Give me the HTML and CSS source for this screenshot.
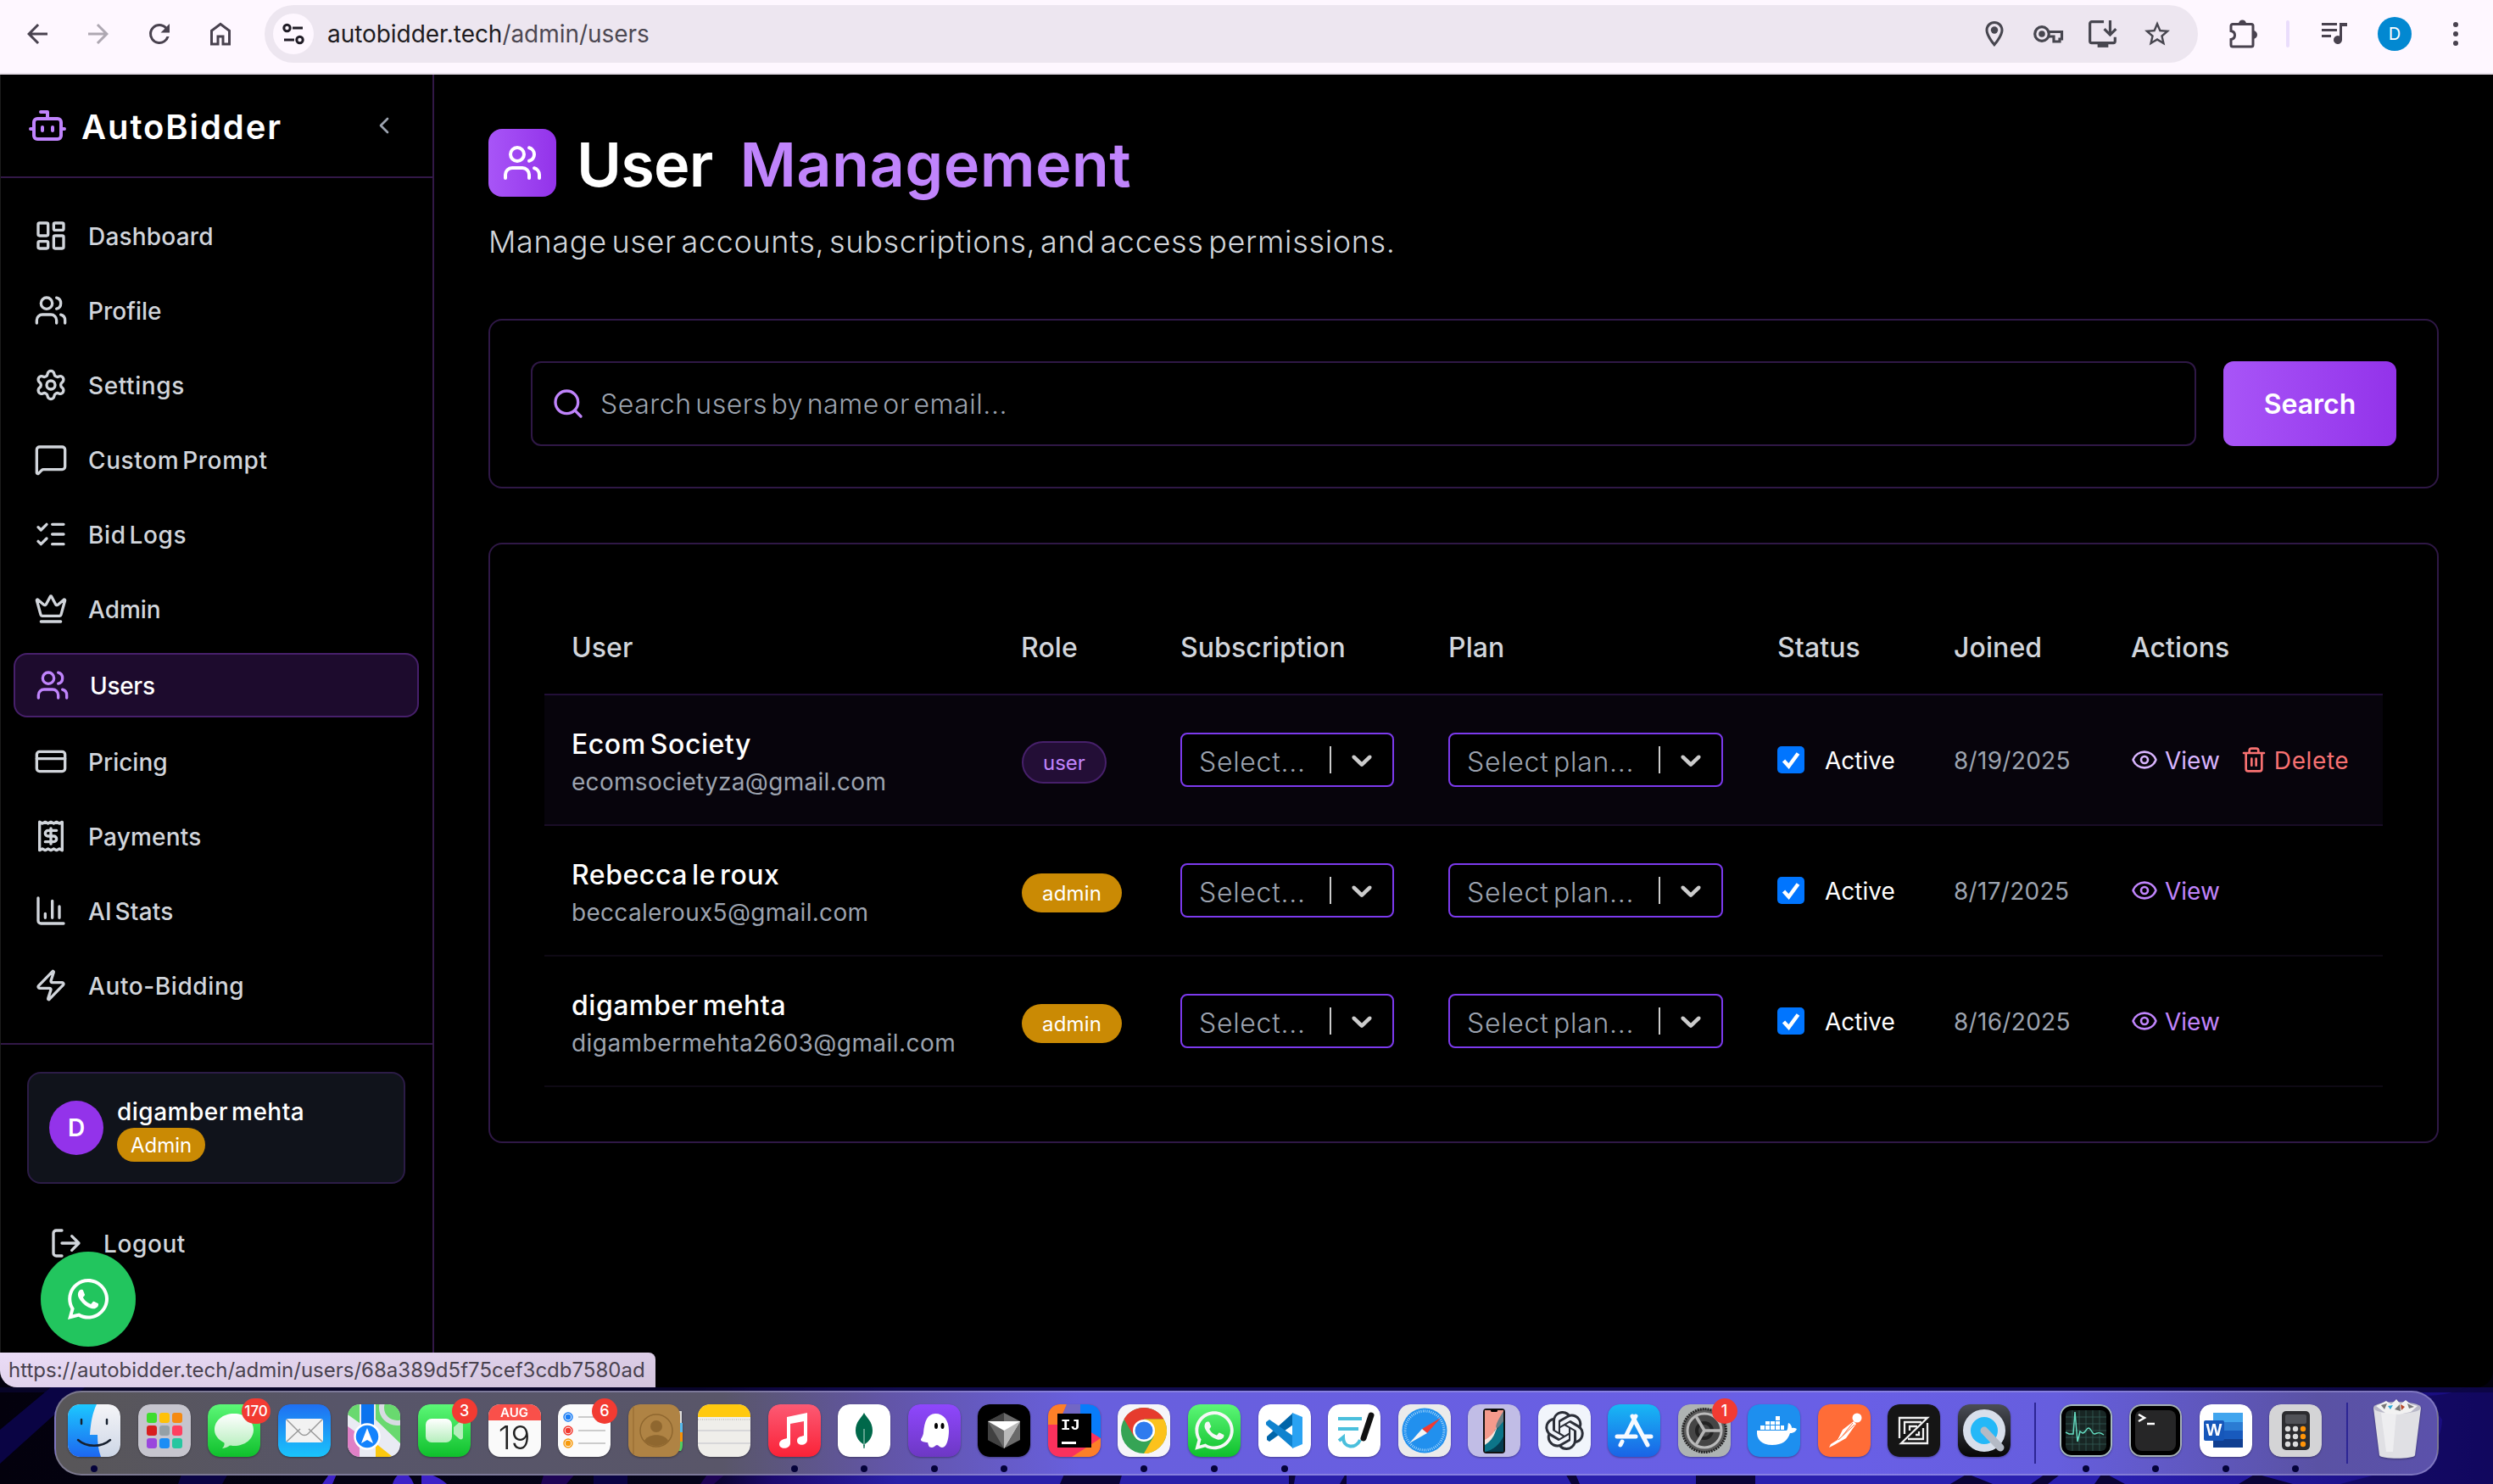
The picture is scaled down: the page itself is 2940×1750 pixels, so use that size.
FILE: index.html
```html
<!DOCTYPE html>
<html lang="en">
<head>
<meta charset="utf-8">
<title>AutoBidder - User Management</title>
<link rel="stylesheet" href="styles.css">
</head>
<body>
<svg class="sprite" aria-hidden="true">
  <symbol id="users" viewBox="0 0 24 24"><path d="M16 21v-2a4 4 0 0 0-4-4H6a4 4 0 0 0-4 4v2"/><circle cx="9" cy="7" r="4"/><path d="M22 21v-2a4 4 0 0 0-3-3.87M16 3.13a4 4 0 0 1 0 7.75"/></symbol>
  <symbol id="eye" viewBox="0 0 24 24"><path d="M2.06 12.35a1 1 0 0 1 0-.7 10.75 10.75 0 0 1 19.88 0 1 1 0 0 1 0 .7 10.75 10.75 0 0 1-19.88 0"/><circle cx="12" cy="12" r="3"/></symbol>
  <symbol id="caret" viewBox="0 0 20 20"><path d="M4.516 7.548c0.436-0.446 1.043-0.481 1.576 0l3.908 3.747 3.908-3.747c0.533-0.481 1.141-0.446 1.574 0 0.436 0.445 0.408 1.197 0 1.615-0.406 0.418-4.695 4.502-4.695 4.502-0.217 0.223-0.502 0.335-0.787 0.335s-0.57-0.112-0.789-0.335c0 0-4.287-4.084-4.695-4.502s-0.436-1.17 0-1.615z"/></symbol>
  <symbol id="whatsapp" viewBox="0 0 448 512"><path d="M380.9 97.1C339 55.1 283.2 32 223.9 32c-122.4 0-222 99.6-222 222 0 39.1 10.2 77.3 29.6 111L0 480l117.7-30.9c32.4 17.7 68.9 27 106.1 27h.1c122.3 0 224.1-99.6 224.1-222 0-59.3-25.2-115-67.1-157zm-157 341.6c-33.2 0-65.7-8.9-94-25.7l-6.7-4-69.8 18.3L72 359.2l-4.4-7c-18.5-29.4-28.2-63.3-28.2-98.2 0-101.7 82.8-184.5 184.6-184.5 49.3 0 95.6 19.2 130.4 54.1 34.8 34.9 56.2 81.2 56.1 130.5 0 101.8-84.9 184.6-186.6 184.6zm101.2-138.2c-5.5-2.8-32.8-16.2-37.9-18-5.1-1.9-8.8-2.8-12.5 2.8-3.7 5.6-14.3 18-17.6 21.8-3.2 3.7-6.5 4.2-12 1.4-32.6-16.3-54-29.1-75.5-66-5.7-9.8 5.7-9.1 16.3-30.3 1.8-3.7.9-6.9-.5-9.7-1.4-2.8-12.5-30.1-17.1-41.2-4.5-10.8-9.1-9.3-12.5-9.5-3.2-.2-6.9-.2-10.6-.2-3.7 0-9.7 1.4-14.8 6.9-5.1 5.6-19.4 19-19.4 46.3 0 27.3 19.9 53.7 22.6 57.4 2.8 3.7 39.1 59.7 94.8 83.8 35.2 15.2 49 16.5 66.6 13.9 10.7-1.6 32.8-13.4 37.4-26.4 4.6-13 4.6-24.1 3.2-26.4-1.3-2.5-5-3.9-10.5-6.6z"/></symbol>
</svg>

<div class="desktop">
<div class="browser">

  <header class="toolbar">
    <div class="tool-nav">
      <svg class="tool" viewBox="0 0 24 24"><path d="M20 11H7.83l5.59-5.59L12 4l-8 8 8 8 1.41-1.41L7.83 13H20v-2z"/></svg>
      <svg class="tool tool-off" viewBox="0 0 24 24"><path d="M12 4l-1.41 1.41L16.17 11H4v2h12.17l-5.58 5.59L12 20l8-8z"/></svg>
      <svg class="tool" viewBox="0 0 24 24"><path d="M17.65 6.35A7.96 7.96 0 0 0 12 4a8 8 0 1 0 7.73 10h-2.08A6 6 0 1 1 12 6c1.66 0 3.14.69 4.22 1.78L13 11h7V4z"/></svg>
      <svg class="tool" viewBox="0 0 24 24"><path d="M6 19h3v-6h6v6h3v-9l-6-4.500L6 10v9zm-2 2V9l8-6 8 6v12h-7v-6h-2v6z"/></svg>
    </div>
    <div class="omnibox">
      <span class="site-info"><svg viewBox="0 0 28 28"><g fill="none" stroke="#201c26" stroke-width="3"><circle cx="6.500" cy="7" r="3.700"/><path d="M13 7h12M3 21h12"/><circle cx="21.500" cy="21" r="3.700"/></g></svg></span>
      <span class="url">autobidder.tech<span class="url-path">/admin/users</span></span>
      <div class="omni-actions">
        <svg viewBox="0 0 24 24"><path d="M12 2C8.100 2 5 5.100 5 9c0 5.300 7 13 7 13s7-7.700 7-13c0-3.900-3.100-7-7-7zM7 9a5 5 0 0 1 10 0c0 2.900-2.900 7.200-5 9.900C9.900 16.200 7 11.900 7 9z"/><circle cx="12" cy="9" r="2.800"/></svg>
        <svg viewBox="0 0 36 30"><g fill="none" stroke="#47464f" stroke-width="3.200"><path d="M17.500 12.500H33.500V21h-2.500v3h-7v-6h-6.500"/><circle cx="10" cy="15" r="8.300"/></g><circle cx="10" cy="15" r="3.800"/></svg>
        <svg viewBox="0 0 34 34"><path fill="none" stroke="#47464f" stroke-width="3" d="M18 3.500H4.500a2 2 0 0 0-2 2V25a2 2 0 0 0 2 2h24a2 2 0 0 0 2-2v-4.500M25 2v15M18.500 11.500L25 18l6.500-6.500"/><path d="M11 27h12v5H11z"/></svg>
        <svg viewBox="0 0 24 24"><path d="M22 9.240l-7.190-.620L12 2 9.190 8.630 2 9.240l5.460 4.730L5.820 21 12 17.270 18.180 21l-1.630-7.030L22 9.240zM12 15.400l-3.760 2.270 1-4.280-3.320-2.880 4.380-.380L12 6.100l1.710 4.040 4.380.380-3.320 2.880 1 4.280L12 15.400z"/></svg>
      </div>
    </div>
    <div class="tool-right">
      <svg class="puzzle" viewBox="0 0 36 36"><path fill="none" stroke="#49424f" stroke-width="3" d="M4 8.500a2 2 0 0 1 2-2h22a2 2 0 0 1 2 2V31a2 2 0 0 1-2 2H6a2 2 0 0 1-2-2v-6.500c6-1 6-9 0-10z"/><path d="M13 6a4.500 4.500 0 0 1 9 0zM30 14a5 5 0 0 1 0 10z"/></svg>
      <i class="tool-rule"></i>
      <svg class="queue" viewBox="0 0 32 32"><path d="M1 3h18v3H1zM1 10h18v3H1zM1 17h11v3H1zM22 3h9v4h-6v16a5 5 0 1 1-3-4.600z"/></svg>
      <span class="profile">D</span>
      <svg class="dots" viewBox="0 0 8 32"><circle cx="4" cy="5" r="3"/><circle cx="4" cy="16" r="3"/><circle cx="4" cy="27" r="3"/></svg>
    </div>
  </header>

  <div class="page">
    <aside class="sidebar">
      <div class="brand">
        <svg class="line brand-icon" viewBox="0 0 24 24"><path d="M12 8V4H8"/><rect width="16" height="12" x="4" y="8" rx="2"/><path d="M2 14h2M20 14h2M15 13v2M9 13v2"/></svg>
        <span class="brand-name">AutoBidder</span>
        <svg class="line collapse" viewBox="0 0 24 24"><path d="m15 18-6-6 6-6"/></svg>
      </div>
      <nav class="menu">
        <a class="item"><svg class="line" viewBox="0 0 24 24"><rect width="7" height="9" x="3" y="3" rx="1"/><rect width="7" height="5" x="14" y="3" rx="1"/><rect width="7" height="9" x="14" y="12" rx="1"/><rect width="7" height="5" x="3" y="16" rx="1"/></svg><span>Dashboard</span></a>
        <a class="item snug"><svg class="line"><use href="#users"/></svg><span>Profile</span></a>
        <a class="item airy"><svg class="line" viewBox="0 0 24 24"><path d="M9.671 4.136a2.340 2.340 0 0 1 4.659 0 2.340 2.340 0 0 0 3.319 1.915 2.340 2.340 0 0 1 2.330 4.033 2.340 2.340 0 0 0 0 3.831 2.340 2.340 0 0 1-2.330 4.033 2.340 2.340 0 0 0-3.319 1.915 2.340 2.340 0 0 1-4.659 0 2.340 2.340 0 0 0-3.320-1.915 2.340 2.340 0 0 1-2.330-4.033 2.340 2.340 0 0 0 0-3.831A2.340 2.340 0 0 1 6.350 6.051a2.340 2.340 0 0 0 3.319-1.915"/><circle cx="12" cy="12" r="3"/></svg><span>Settings</span></a>
        <a class="item airy"><svg class="line" viewBox="0 0 24 24"><path d="M22 17a2 2 0 0 1-2 2H6.828a2 2 0 0 0-1.414.586l-2.202 2.202A.710.710 0 0 1 2 21.286V5a2 2 0 0 1 2-2h16a2 2 0 0 1 2 2z"/></svg><span>Custom Prompt</span></a>
        <a class="item airy"><svg class="line" viewBox="0 0 24 24"><path d="M13 5h8M13 12h8M13 19h8M3 17l2 2 4-4M3 7l2 2 4-4"/></svg><span>Bid Logs</span></a>
        <a class="item snug"><svg class="line" viewBox="0 0 24 24"><path d="M11.562 3.266a.5.5 0 0 1 .876 0L15.390 8.870a1 1 0 0 0 1.516.294L21.183 5.500a.5.5 0 0 1 .798.519l-2.834 10.246a1 1 0 0 1-.956.734H5.810a1 1 0 0 1-.957-.734L2.020 6.020a.5.5 0 0 1 .798-.519l4.276 3.664a1 1 0 0 0 1.516-.294zM5 21h14"/></svg><span>Admin</span></a>
        <a class="item item-active tight"><svg class="line"><use href="#users"/></svg><span>Users</span></a>
        <a class="item snug"><svg class="line" viewBox="0 0 24 24"><rect width="20" height="14" x="2" y="5" rx="2"/><path d="M2 10h20"/></svg><span>Pricing</span></a>
        <a class="item"><svg class="line" viewBox="0 0 24 24"><path d="M4 2v20l2-1 2 1 2-1 2 1 2-1 2 1 2-1 2 1V2l-2 1-2-1-2 1-2-1-2 1-2-1-2 1Z"/><path d="M16 8h-6a2 2 0 1 0 0 4h4a2 2 0 1 1 0 4H8M12 17.500v-11"/></svg><span>Payments</span></a>
        <a class="item"><svg class="line" viewBox="0 0 24 24"><path d="M3 3v16a2 2 0 0 0 2 2h16M18 17V9M13 17V5M8 17v-3"/></svg><span>AI Stats</span></a>
        <a class="item airy"><svg class="line" viewBox="0 0 24 24"><path d="M4 14a1 1 0 0 1-.780-1.630l9.900-10.200a.5.5 0 0 1 .860.460l-1.920 6.020A1 1 0 0 0 13 10h7a1 1 0 0 1 .780 1.630l-9.900 10.200a.5.5 0 0 1-.860-.460l1.920-6.020A1 1 0 0 0 11 14z"/></svg><span>Auto-Bidding</span></a>
      </nav>
      <div class="account">
        <div class="account-card">
          <span class="avatar">D</span>
          <div class="account-text"><span class="account-name">digamber mehta</span><span class="account-role">Admin</span></div>
        </div>
        <a class="logout"><svg class="line" viewBox="0 0 24 24"><path d="M9 21H5a2 2 0 0 1-2-2V5a2 2 0 0 1 2-2h4M16 17l5-5-5-5M21 12H9"/></svg><span>Logout</span></a>
      </div>
      <a class="chat"><svg><use href="#whatsapp"/></svg></a>
    </aside>

    <main class="content">
      <div class="heading">
        <span class="heading-icon"><svg class="line"><use href="#users"/></svg></span>
        <h1><span class="h-user">User</span><span class="accent">Management</span></h1>
      </div>
      <p class="lead">Manage user accounts, subscriptions, and access permissions.</p>

      <section class="card search-card">
        <div class="search-box">
          <svg class="line" viewBox="0 0 24 24"><circle cx="11" cy="11" r="8"/><path d="m21 21-4.300-4.300"/></svg>
          <span>Search users by name or email...</span>
        </div>
        <button class="search-button">Search</button>
      </section>

      <section class="card table-card">
        <div class="row head">
          <span>User</span><span>Role</span><span>Subscription</span><span>Plan</span><span>Status</span><span>Joined</span><span>Actions</span>
        </div>
        <div class="row row-hover">
          <div class="person"><span class="name">Ecom Society</span><span class="mail">ecomsocietyza@gmail.com</span></div>
          <div><span class="badge badge-user">user</span></div>
          <div><div class="select"><span>Select...</span><i></i><svg><use href="#caret"/></svg></div></div>
          <div><div class="select"><span>Select plan...</span><i></i><svg><use href="#caret"/></svg></div></div>
          <div class="status"><span class="check"><svg viewBox="0 0 32 32"><path d="M7.500 17l6 6.500L24.500 8.500"/></svg></span><span>Active</span></div>
          <div class="date">8/19/2025</div>
          <div class="actions"><a class="view view-hover"><svg class="line"><use href="#eye"/></svg><span>View</span></a><a class="delete"><svg class="line" viewBox="0 0 24 24"><path d="M10 11v6M14 11v6M19 6v14a2 2 0 0 1-2 2H7a2 2 0 0 1-2-2V6M3 6h18M8 6V4a2 2 0 0 1 2-2h4a2 2 0 0 1 2 2v2"/></svg><span>Delete</span></a></div>
        </div>
        <div class="row">
          <div class="person"><span class="name">Rebecca le roux</span><span class="mail">beccaleroux5@gmail.com</span></div>
          <div><span class="badge">admin</span></div>
          <div><div class="select"><span>Select...</span><i></i><svg><use href="#caret"/></svg></div></div>
          <div><div class="select"><span>Select plan...</span><i></i><svg><use href="#caret"/></svg></div></div>
          <div class="status"><span class="check"><svg viewBox="0 0 32 32"><path d="M7.500 17l6 6.500L24.500 8.500"/></svg></span><span>Active</span></div>
          <div class="date">8/17/2025</div>
          <div class="actions"><a class="view"><svg class="line"><use href="#eye"/></svg><span>View</span></a></div>
        </div>
        <div class="row">
          <div class="person"><span class="name">digamber mehta</span><span class="mail mail-wide">digambermehta2603@gmail.com</span></div>
          <div><span class="badge">admin</span></div>
          <div><div class="select"><span>Select...</span><i></i><svg><use href="#caret"/></svg></div></div>
          <div><div class="select"><span>Select plan...</span><i></i><svg><use href="#caret"/></svg></div></div>
          <div class="status"><span class="check"><svg viewBox="0 0 32 32"><path d="M7.500 17l6 6.500L24.500 8.500"/></svg></span><span>Active</span></div>
          <div class="date">8/16/2025</div>
          <div class="actions"><a class="view"><svg class="line"><use href="#eye"/></svg><span>View</span></a></div>
        </div>
      </section>
    </main>
  </div>
  <div class="link-status"><span>https://autobidder.tech/admin/users/68a389d5f75cef3cdb7580ad</span></div>
</div>

<footer class="dock-area">
  <svg class="wallpaper" viewBox="0 0 2940 114" preserveAspectRatio="none">
    <defs><linearGradient id="wp"><stop offset="0" stop-color="#03010d"/><stop offset=".28" stop-color="#05031a"/><stop offset=".31" stop-color="#1c0a6e"/><stop offset=".36" stop-color="#2a20a8"/><stop offset=".85" stop-color="#2a20b0"/><stop offset="1" stop-color="#170a78"/></linearGradient></defs>
    <rect width="2940" height="114" fill="url(#wp)"/>
    <rect width="2940" height="6" fill="#0a0630" opacity=".75"/>
    <path fill="#0a0444" d="M0 50L60 0h40L0 90zM210 114l5-14h55l-8 14zM700 114V98h40v16z"/>
    <path fill="#3d22c8" d="M380 114l10-14h8l-6 14zM463 114c5-16 18-18 25 0zM497 114V100c10 2 22 6 30 14z"/>
    <path fill="#1e0455" d="M638 114l4-14h38l-12 14zM826 114l10-14h22l-16 14z"/>
    <path fill="#0b0438" d="M1250 114l6-14h68l-4 14zM1520 102h8l-2 12h-6zM1580 114l8-14v14zM1845 100h12l6 14h-10zM2000 100h70v14h-70zM2395 114l20-14h18l-18 14zM2300 114l20-12 30 12zM2470 114l10-14 26 14zM2640 114l20-12 44 12z"/>
    <path fill="#0c0548" d="M2860 10c30 0 60-10 80-30v134h-180l60-16c30 0 60-30 60-60z" opacity=".55"/>
  </svg>
  <div class="dock">
    <div class="app on"><svg viewBox="0 0 62 62"><defs><linearGradient id="fa" x2="0" y2="1"><stop stop-color="#1cc8ff"/><stop offset="1" stop-color="#1d67f0"/></linearGradient><linearGradient id="fb" x2="0" y2="1"><stop stop-color="#f5f5f8"/><stop offset="1" stop-color="#cdd6e6"/></linearGradient></defs><rect width="62" height="62" rx="14" fill="url(#fb)"/><path fill="url(#fa)" d="M14 0h20c-5 10-7 22-8 36h9c0 10 1 18 4 26H14A14 14 0 0 1 0 48V14A14 14 0 0 1 14 0z"/><path d="M16 18v5M46 18v5M12 42c10 9 28 9 38 0" fill="none" stroke="#16202e" stroke-width="2.500" stroke-linecap="round"/></svg></div>
    <div class="app"><svg viewBox="0 0 62 62"><rect width="62" height="62" rx="14" fill="#c6c5ce"/><g><rect x="10" y="10" width="12" height="12" rx="3" fill="#3fdc2f"/><rect x="25" y="10" width="12" height="12" rx="3" fill="#ffc107"/><rect x="40" y="10" width="12" height="12" rx="3" fill="#f58a12"/><rect x="10" y="25" width="12" height="12" rx="3" fill="#d81e1e"/><rect x="25" y="25" width="12" height="12" rx="3" fill="#95a0a6"/><rect x="40" y="25" width="12" height="12" rx="3" fill="#ff3f60"/><rect x="10" y="40" width="12" height="12" rx="3" fill="#9a46dd"/><rect x="25" y="40" width="12" height="12" rx="3" fill="#1b8df5"/><rect x="40" y="40" width="12" height="12" rx="3" fill="#26c6a0"/></g></svg></div>
    <div class="app"><svg viewBox="0 0 62 62"><defs><linearGradient id="gr" x2="0" y2="1"><stop stop-color="#5cf777"/><stop offset="1" stop-color="#0fc02c"/></linearGradient><linearGradient id="wh" x2="0" y2="1"><stop stop-color="#fff"/><stop offset="1" stop-color="#b5eebc"/></linearGradient></defs><rect width="62" height="62" rx="14" fill="url(#gr)"/><path fill="url(#wh)" d="M31 11c13 0 23 8 23 19S44 49 31 49c-2 0-4 0-5-.4-2 2-5 3-9 3.400 2-2 3-4 2.500-6.500C13 42 8 37 8 30c0-11 10-19 23-19z"/></svg><b class="count wide">170</b></div>
    <div class="app"><svg viewBox="0 0 62 62"><defs><linearGradient id="ml" x2="0" y2="1"><stop stop-color="#1f6ff2"/><stop offset="1" stop-color="#1ac4fb"/></linearGradient></defs><rect width="62" height="62" rx="14" fill="url(#ml)"/><rect x="9" y="17" width="44" height="28" rx="3" fill="#f2f2f2"/><path d="M10 44l16-15M52 44L36 29M10 18l17 17c2 2 6 2 8 0l17-17" fill="none" stroke="#9a9a9a" stroke-width="1.500"/></svg></div>
    <div class="app"><svg viewBox="0 0 62 62"><clipPath id="mc"><rect width="62" height="62" rx="14"/></clipPath><g clip-path="url(#mc)"><rect width="62" height="62" fill="#e9ebf3"/><path fill="#69d96f" d="M0 0h14v22L0 12zM33 0h29v46L33 18z"/><path fill="#df80c6" d="M0 26l14 10v26H0z"/><path fill="#fbc80f" d="M33 46l20 16H33z"/><path fill="#0c73ee" d="M16 0h15v34H16z"/><circle cx="58" cy="4" r="18" fill="none" stroke="#d8dbe2" stroke-width="6"/><circle cx="23" cy="38" r="14.500" fill="#1383fd" stroke="#fff" stroke-width="2.500"/><path fill="#fff" d="M23 28l7 18-7-4-7 4z"/></g></svg></div>
    <div class="app"><svg viewBox="0 0 62 62"><rect width="62" height="62" rx="14" fill="url(#gr)"/><rect x="9" y="17" width="31" height="28" rx="7" fill="url(#wh)"/><path d="M42 27l7-6c2-1 4 0 4 2v16c0 2-2 3-4 2l-7-6z" fill="#b5eebc"/></svg><b class="count">3</b></div>
    <div class="app"><div class="cal"><span>AUG</span><strong>19</strong></div></div>
    <div class="app"><svg viewBox="0 0 62 62"><rect width="62" height="62" rx="14" fill="#fbfbfb"/><path d="M24 15h32M24 31h32M24 46h32" stroke="#bdbdbd" stroke-width="1.500"/><g fill="none" stroke-width="1.500"><circle cx="12" cy="15" r="5" stroke="#1a7df5"/><circle cx="12" cy="31" r="5" stroke="#f2392f"/><circle cx="12" cy="46" r="5" stroke="#f79a0b"/></g><circle cx="12" cy="15" r="3.300" fill="#1a7df5"/><circle cx="12" cy="31" r="3.300" fill="#f2392f"/><circle cx="12" cy="46" r="3.300" fill="#f79a0b"/></svg><b class="count">6</b></div>
    <div class="app"><svg class="contacts" viewBox="0 0 64 62"><path fill="#dedede" d="M56 8h7v14h-7z"/><path fill="#55b9ee" d="M56 22h8v11h-8z"/><path fill="#f6920a" d="M56 33h8v11h-8z"/><path fill="#52cf60" d="M56 44h8v11h-8z"/><rect width="61" height="62" rx="13" fill="#af8344"/><path d="M6 3v56" stroke="#94692f"/><circle cx="33" cy="31" r="19" fill="none" stroke="#8f672f" stroke-width="1.500"/><circle cx="33" cy="26" r="7" fill="#8f672f"/><path fill="#8f672f" d="M19 43c4-9 24-9 28 0-7 8-21 8-28 0z"/></svg></div>
    <div class="app"><svg viewBox="0 0 62 62"><rect width="62" height="62" rx="14" fill="#efeeea"/><path fill="#ffc90f" d="M14 0h34a14 14 0 0 1 14 14v1H0v-1A14 14 0 0 1 14 0z"/><path stroke="#aaa" stroke-dasharray="1 1.500" d="M0 18h62"/><path stroke="#cfcfd4" stroke-width="1.500" d="M0 31h62M0 46h62"/></svg></div>
    <div class="app on"><svg viewBox="0 0 62 62"><defs><linearGradient id="mu" x2="0" y2="1"><stop stop-color="#fc5a74"/><stop offset="1" stop-color="#fa2237"/></linearGradient></defs><rect width="62" height="62" rx="14" fill="url(#mu)"/><path fill="#fff" d="M22 15l24-5v32c0 7-12 8-12 1 0-5 5-5 8-6V20l-16 3v23c0 7-13 8-13 1 0-5 6-6 9-7z"/></svg></div>
    <div class="app on"><svg viewBox="0 0 62 62"><rect width="62" height="62" rx="14" fill="#fff"/><path fill="#00684a" d="M31 10c3 6 10 10 10 21 0 9-6 14-9 16l-.5 5h-1l-.5-5c-3-2-9-7-9-16 0-11 7-15 10-21z"/><path stroke="#b7d9ce" d="M31 29v19"/></svg></div>
    <div class="app on"><svg viewBox="0 0 62 62"><defs><linearGradient id="gh" x2="0" y2="1"><stop stop-color="#8f47fd"/><stop offset="1" stop-color="#6d38c4"/></linearGradient></defs><rect width="62" height="62" rx="14" fill="url(#gh)"/><path fill="#fff" d="M32 11c10 0 16 8 16 20 0 8-2 20-8 20-3 0-4-3-6-3s-3 3-6 3c-4 0-4-3-5-6-3 0-8-1-8-3s2-3 3-8c1-14 5-23 14-23z"/><ellipse cx="33" cy="25.500" rx="2" ry="3.500"/><ellipse cx="40.500" cy="25.500" rx="2" ry="3.500"/></svg></div>
    <div class="app on"><svg viewBox="0 0 62 62"><rect width="62" height="62" rx="14"/><path fill="#6a6a6a" d="M31 10l19 10v22L31 52 12 42V20z"/><path fill="#303030" d="M31 10L12 20h19zM12 20l19 32-19-10z" opacity=".7"/><path fill="#fff" d="M12 20h38L31 52V31z"/><path fill="#b9b9b9" d="M50 20L31 52V31z"/></svg></div>
    <div class="app"><svg viewBox="0 0 62 62"><clipPath id="ij"><rect width="62" height="62" rx="14"/></clipPath><g clip-path="url(#ij)"><rect width="62" height="62" fill="#fa315d"/><path fill="#fd7f28" d="M0 0h22l-10 24H0zM28 62l34-22v22z"/><path fill="#087cfa" d="M30 0h32v40L30 20z"/><path fill="#7267c4" d="M22 0h16v14H16z"/></g><path d="M11 11h40v40H11z"/><path fill="#fff" d="M16 44h17v3H16z"/><text x="15" y="30" class="ij">IJ</text></svg></div>
    <div class="app on"><svg viewBox="0 0 62 62"><rect width="62" height="62" rx="14" fill="#f6f5f9"/><circle cx="31" cy="31" r="27" fill="#35a455"/><path fill="#e63b2e" d="M7.600 17.500L19.300 37.700 31 17.500H54.400A27 27 0 0 0 7.600 17.500z"/><path fill="#fcc21b" d="M31 17.500h23.400A27 27 0 0 1 31 58l11.700-20.300z"/><circle cx="31" cy="31" r="13" fill="#fff"/><circle cx="31" cy="31" r="10.500" fill="#2f7bee"/></svg></div>
    <div class="app on"><svg viewBox="0 0 62 62"><rect width="62" height="62" rx="14" fill="url(#gr)"/><svg class="wa" x="7" y="5" width="48" height="52"><use href="#whatsapp"/></svg></svg></div>
    <div class="app on"><svg viewBox="0 0 62 62"><rect width="62" height="62" rx="14" fill="#fff"/><path fill="#0065a9" d="M41 10L10 38v4l3 2 28-20z"/><path fill="#1083cf" d="M13 18l-4 3v3l32 28 1-14z"/><path fill="#2aa2f2" d="M40 10l12 5v32l-12 5z"/></svg></div>
    <div class="app"><svg viewBox="0 0 62 62"><rect width="62" height="62" rx="14" fill="#fff"/><path d="M12 17h28M12 29h24M13 43l5-4c0 13 15 14 20 3" fill="none" stroke="#4abfdc" stroke-width="4"/><path d="M51 13l-9 27" stroke="#111" stroke-width="7" stroke-linecap="round"/></svg></div>
    <div class="app"><svg viewBox="0 0 62 62"><rect width="62" height="62" rx="14" fill="#ebebeb"/><circle cx="31" cy="31" r="26.500" fill="#2190ee"/><circle cx="31" cy="31" r="23" fill="none" stroke="#bfe2fb" stroke-width="3" stroke-dasharray=".8 1.600"/><path fill="#f03b33" d="M50 16L34 34l-6-5z"/><path fill="#f4f4f4" d="M13 46l15-17 6 5z"/></svg></div>
    <div class="app"><svg viewBox="0 0 62 62"><rect width="62" height="62" rx="14" fill="#c1bde6"/><rect x="18" y="5" width="26" height="53" rx="4" fill="#111"/><path fill="#f49a8c" d="M20 7h22v14l-10 9c-3 10-8 12-12 14z"/><path fill="#6d7f86" d="M42 8v14l-8 7c-3-4 4-14 8-21z"/><path fill="#f6e7df" d="M34 27c-4 8-8 12-14 15v8c8-4 14-12 14-23z"/><path fill="#0c7488" d="M42 20v36H20V48c6-4 10-8 13-17z"/><path fill="#063c50" d="M42 38v18H20c10-2 17-8 22-18z"/><rect x="27" y="6" width="8" height="3" rx="1.500"/></svg></div>
    <div class="app"><svg viewBox="0 0 62 62"><rect width="62" height="62" rx="14" fill="#f1f5fb"/><svg x="8" y="8" width="46" height="46" viewBox="0 0 24 24"><path fill="#2b2f38" d="M22.2819 9.8211a5.9847 5.9847 0 0 0-.5157-4.9108 6.0462 6.0462 0 0 0-6.5098-2.9A6.0651 6.0651 0 0 0 4.9807 4.1818a5.9847 5.9847 0 0 0-3.9977 2.9 6.0462 6.0462 0 0 0 .7427 7.0966 5.98 5.98 0 0 0 .511 4.9107 6.051 6.051 0 0 0 6.5146 2.9001A5.9847 5.9847 0 0 0 13.2599 24a6.0557 6.0557 0 0 0 5.7718-4.2058 5.9894 5.9894 0 0 0 3.9977-2.9001 6.0557 6.0557 0 0 0-.7475-7.0729zm-9.022 12.6081a4.4755 4.4755 0 0 1-2.8764-1.0408l.1419-.0804 4.7783-2.7582a.7948.7948 0 0 0 .3927-.6813v-6.7369l2.02 1.1686a.071.071 0 0 1 .038.052v5.5826a4.504 4.504 0 0 1-4.4945 4.4944zm-9.6607-4.1254a4.4708 4.4708 0 0 1-.5346-3.0137l.142.0852 4.783 2.7582a.7712.7712 0 0 0 .7806 0l5.8428-3.3685v2.3324a.0804.0804 0 0 1-.0332.0615L9.74 19.9502a4.4992 4.4992 0 0 1-6.1408-1.6464zM2.3408 7.8956a4.485 4.485 0 0 1 2.3655-1.9728V11.6a.7664.7664 0 0 0 .3879.6765l5.8144 3.3543-2.0201 1.1685a.0757.0757 0 0 1-.071 0l-4.8303-2.7865A4.504 4.504 0 0 1 2.3408 7.872zm16.5963 3.8558L13.1038 8.364 15.1192 7.2a.0757.0757 0 0 1 .071 0l4.8303 2.7913a4.4944 4.4944 0 0 1-.6765 8.1042v-5.6772a.79.79 0 0 0-.407-.667zm2.0107-3.0231l-.142-.0852-4.7735-2.7818a.7759.7759 0 0 0-.7854 0L9.409 9.2297V6.8974a.0662.0662 0 0 1 .0284-.0615l4.8303-2.7866a4.4992 4.4992 0 0 1 6.6802 4.66zM8.3065 12.863l-2.02-1.1638a.0804.0804 0 0 1-.038-.0567V6.0742a4.4992 4.4992 0 0 1 7.3757-3.4537l-.142.0805L8.704 5.459a.7948.7948 0 0 0-.3927.6813zm1.0976-2.3654l2.602-1.4998 2.6069 1.4998v2.9994l-2.5974 1.4997-2.6067-1.4997Z"/></svg></svg></div>
    <div class="app"><svg viewBox="0 0 62 62"><defs><linearGradient id="as" x2="0" y2="1"><stop stop-color="#18b8f5"/><stop offset="1" stop-color="#1a63e6"/></linearGradient></defs><rect width="62" height="62" rx="14" fill="url(#as)"/><path d="M33 14L21 38M17 44l-2 4M29 14l18 34M11 38h22M43 38h8" stroke="#f7faff" stroke-width="5" stroke-linecap="round"/></svg></div>
    <div class="app"><svg viewBox="0 0 62 62"><rect width="62" height="62" rx="14" fill="#aeb3b3"/><circle cx="31" cy="31" r="25.500" fill="#5b5b5b" stroke="#252525" stroke-width="3" stroke-dasharray="2 1"/><circle cx="31" cy="31" r="20" fill="#454545" stroke="#bababa" stroke-width="3"/><circle cx="31" cy="31" r="9" fill="none" stroke="#222" stroke-width="4"/><path d="M31 31h20M31 31L21 14M31 31L21 48" stroke="#b5b5b5" stroke-width="3.500"/></svg><b class="count">1</b></div>
    <div class="app"><svg viewBox="0 0 62 62"><rect width="62" height="62" rx="14" fill="#1d8fef"/><g fill="#fff"><path d="M11 31h35c2-2 1-6 2-9 3 1 4 4 4 6 2-.5 4 0 6 1-1 3-4 5-8 5-3 9-9 14-21 14-13 0-19-7-18-17z"/><path d="M15 25h5v5h-5zM21 25h5v5h-5zM27 25h5v5h-5zM33 25h5v5h-5zM39 25h4v5h-4zM21 20h5v4h-5zM27 20h5v4h-5zM33 20h5v4h-5zM33 14h5v5h-5z"/></g></svg></div>
    <div class="app"><svg viewBox="0 0 62 62"><rect width="62" height="62" rx="14" fill="#ff6c37"/><g fill="#fff"><circle cx="46" cy="16" r="5.500"/><path d="M42 20l3 3-12 17-14 8-6 3 2-4 8-5 6-12z"/></g><path d="M41 22L29 37M43 24L24 42" stroke="#ff6c37"/></svg></div>
    <div class="app"><svg viewBox="0 0 62 62"><rect width="62" height="62" rx="14" fill="#151515"/><path fill="none" stroke="#f2f2f2" stroke-width="2.300" d="M14 40V16h33L16 46h31V22M20 35V21h20M24 41h18V28M26 31v-5h9M33 36h4v-4"/></svg></div>
    <div class="app"><svg viewBox="0 0 62 62"><defs><linearGradient id="qt" x2="0" y2="1"><stop stop-color="#4a4d56"/><stop offset="1" stop-color="#060606"/></linearGradient></defs><rect width="62" height="62" rx="14" fill="url(#qt)"/><circle cx="31" cy="31" r="20.500" fill="#24b8f8" stroke="#d8dfeb" stroke-width="9"/><path d="M31 31l19 20" stroke="#b4bac5" stroke-width="9" stroke-linecap="round"/></svg></div>
    <i class="dock-rule"></i>
    <div class="app on"><svg viewBox="0 0 62 62"><rect x="1" y="1" width="60" height="60" rx="13" stroke="#a5b9bd" stroke-width="2"/><rect x="7" y="7" width="48" height="48" rx="6" fill="#182624"/><path stroke="#335a55" stroke-width=".8" d="M15 7v48M23 7v48M31 7v48M39 7v48M47 7v48M7 15h48M7 23h48M7 31h48M7 39h48M7 47h48"/><path fill="none" stroke="#64dcc0" stroke-width="1.500" d="M7 33l4 2h5l2-26 3 35 3-12 3 2c4 0 4-6 7-6s4 7 7 7 4-4 11 1"/></svg></div>
    <div class="app on"><svg viewBox="0 0 62 62"><rect x="1" y="1" width="60" height="60" rx="13" stroke="#a5b0b4" stroke-width="2"/><rect x="7" y="7" width="48" height="48" rx="8" fill="#262627"/><path fill="none" stroke="#fff" stroke-width="2.500" d="M11 12l7 4-7 4M21 23h9"/></svg></div>
    <div class="app on"><svg viewBox="0 0 62 62"><rect width="62" height="62" rx="14" fill="#fff"/><path fill="#41a5ee" d="M16 10h35v11H16z"/><path fill="#2b7cd3" d="M16 21h35v10H16z"/><path fill="#185abd" d="M16 31h35v10H16z"/><path fill="#103f91" d="M16 41h35v10H16z"/><rect x="5" y="19" width="24" height="24" rx="2" fill="#1657ba"/><text x="17" y="37" text-anchor="middle" class="word">W</text></svg></div>
    <div class="app on"><svg viewBox="0 0 62 62"><rect width="62" height="62" rx="14" fill="#d4d4d6"/><rect x="15" y="8" width="33" height="46" rx="5" fill="#2c2c2f"/><rect x="19" y="12" width="25" height="11" rx="2" fill="#515257"/><g fill="#dcdcdc"><circle cx="22" cy="29" r="3.200"/><circle cx="31" cy="29" r="3.200"/><circle cx="22" cy="38" r="3.200"/><circle cx="31" cy="38" r="3.200"/><circle cx="22" cy="47" r="3.200"/><circle cx="31" cy="47" r="3.200"/></g><g fill="#ff9408"><circle cx="40" cy="29" r="3.200"/><circle cx="40" cy="38" r="3.200"/><circle cx="40" cy="47" r="3.200"/></g></svg></div>
    <i class="dock-rule"></i>
    <div class="app"><svg class="trash" viewBox="0 0 62 74"><path fill="#e0e0e4" d="M3 12h56l-7 56c-1 5-41 5-42 0z"/><path fill="#f3f3f5" d="M12 18h18l-4 46h-8z" opacity=".7"/><ellipse cx="31" cy="12" rx="28" ry="7" fill="#b9b8c8"/><path fill="#f2f2f2" d="M6 10l12-6 6 4 6-6 5 6 6-5 6 5 8 2-8 7-14 3-15-1z"/><path fill="#777" d="M12 9l7-2-3 7zM43 7l8 4-6 2zM28 14l6-6 1 8z"/><path fill="#2aa9d8" d="M20 10l6-1-3 5z"/><path fill="#b5472a" d="M35 8l5 3-4 4z"/></svg></div>
  </div>
</footer>
</div>
</body>
</html>
```
FILE: styles.css
```css
* { box-sizing: border-box; }
body { margin: 0; background: #03010d; font-family: "Inter", "Liberation Sans", sans-serif; color: #fff; }
svg { display: block; flex: none; }
.sprite { position: absolute; width: 0; height: 0; }
.line { fill: none; stroke: currentColor; stroke-width: 2; stroke-linecap: round; stroke-linejoin: round; }

.desktop { width: 2940px; height: 1750px; display: flex; flex-direction: column; overflow: hidden; }
.browser { position: relative; height: 1636px; display: flex; flex-direction: column; background: #000; border-radius: 0 0 20px 20px; overflow: hidden; flex: none; }

/* Browser toolbar */
.toolbar { height: 88px; flex: none; display: flex; padding: 6px 0 12px 26px; background: #fef7ff; border-bottom: 2px solid #e8e0ea; }
.tool-nav { display: flex; align-items: center; gap: 36px; width: 286px; }
.tool-nav .tool { width: 36px; height: 36px; fill: #49424f; }
.tool-nav .tool-off { fill: #aea8b2; }
.omnibox { width: 2280px; height: 68px; border-radius: 34px; background: #ede6f0; display: flex; align-items: center; padding: 0 30px 0 10px; }
.site-info { width: 48px; height: 48px; border-radius: 50%; background: #fef7ff; display: grid; place-items: center; }
.site-info svg { width: 28px; height: 28px; }
.url { margin-left: 16px; font-size: 28px; color: #1d1b20; letter-spacing: -.05px; }
.url-path { color: #4c4852; }
.omni-actions { margin-left: auto; display: flex; gap: 28px; align-items: center; }
.omni-actions svg { width: 36px; height: 36px; fill: #47464f; }
.tool-right { display: flex; align-items: center; padding-left: 35px; fill: #49424f; }
.puzzle { width: 36px; height: 36px; }
.tool-rule { width: 4px; height: 32px; border-radius: 2px; background: #eaddfc; margin: 0 37px 0 33px; }
.queue { width: 32px; height: 32px; }
.profile { width: 40px; height: 40px; border-radius: 50%; background: #0288d1; font-size: 20px; display: grid; place-items: center; margin-left: 35px; }
.dots { width: 8px; height: 32px; margin-left: 48px; }

.page { flex: 1; display: flex; border-left: 1px solid #1c1c1c; }

/* Sidebar */
.sidebar { width: 511px; border-right: 2px solid #321847; position: relative; color: #d1d5db; }
.brand { height: 122px; border-bottom: 2px solid #321847; display: flex; align-items: center; padding: 0 41px 0 31px; }
.brand-icon { width: 48px; height: 48px; color: #c084fc; }
.brand-name { margin-left: 16px; padding-top: 2px; font-size: 40px; font-weight: 600; letter-spacing: 1.900px; color: #fff; }
.collapse { width: 32px; height: 32px; color: #9ca3af; margin-left: auto; }
.menu { padding: 32px 16px 32px 15px; display: flex; flex-direction: column; gap: 16px; }
.item { height: 72px; padding: 0 24px; display: flex; align-items: center; gap: 24px; font-size: 28px; font-weight: 500; border-radius: 16px; letter-spacing: .2px; word-spacing: -4px; }
.item span, .logout span { padding-top: 2px; }
.airy { letter-spacing: .6px; }
.snug { letter-spacing: 0; }
.tight { letter-spacing: -.300px; }
.item svg, .logout svg { width: 40px; height: 40px; }
.item-active { height: 76px; border: 2px solid #47206b; background: #1d0b2d; color: #fff; }
.item-active svg { color: #c084fc; }
.account { border-top: 2px solid #321847; padding: 32px 32px 0 31px; }
.account-card { height: 132px; border: 2px solid #2c1c47; border-radius: 16px; background: #10131b; display: flex; align-items: center; gap: 16px; padding: 0 24px; }
.avatar { width: 64px; height: 64px; border-radius: 50%; background: #9333ea; color: #fff; display: grid; place-items: center; font-size: 28px; font-weight: 600; }
.account-text { display: flex; flex-direction: column; align-items: flex-start; }
.account-name { height: 40px; font-size: 28px; line-height: 42px; font-weight: 500; color: #fff; letter-spacing: .5px; word-spacing: -4px; }
.account-role { height: 40px; line-height: 42px; padding: 0 16px; border-radius: 20px; background: #ca8a04; color: #fff; font-size: 24px; }
.logout { display: flex; align-items: center; gap: 24px; height: 76px; margin-top: 32px; padding-left: 26px; font-size: 28px; font-weight: 500; letter-spacing: .6px; }
.chat { position: absolute; left: 47px; top: 1388px; width: 112px; height: 112px; border-radius: 50%; background: #22c55e; display: grid; place-items: center; fill: #fff; }
.chat svg { width: 48px; height: 56px; }

/* Main content */
.content { flex: 1; padding: 64px 64px 0; }
.heading { display: flex; align-items: center; gap: 24px; height: 80px; }
.heading-icon { width: 80px; height: 80px; border-radius: 16px; background: linear-gradient(90deg, #a855f7, #9333ea); display: grid; place-items: center; }
.heading-icon svg { width: 48px; height: 48px; }
h1 { margin: 0; padding-top: 3px; font-size: 72px; line-height: 80px; font-weight: 600; display: flex; gap: 32px; }
.h-user { letter-spacing: -.8px; }
.accent { color: #c084fc; letter-spacing: .4px; }
.lead { margin: 24px 0 0; font-size: 36px; line-height: 58px; height: 56px; font-weight: 300; color: #d1d5db; white-space: nowrap; letter-spacing: .660px; word-spacing: -5px; }
.card { border: 2px solid #2f1846; border-radius: 16px; }
.search-card { margin-top: 64px; height: 200px; padding: 48px; display: flex; gap: 32px; }
.search-box { flex: 1; border: 2px solid #2f1846; border-radius: 12px; display: flex; align-items: center; gap: 18px; padding-left: 22px; font-size: 32px; font-weight: 300; color: #9ca3af; letter-spacing: .56px; word-spacing: -5px; }
.search-box span { padding-top: 1px; }
.search-box svg { width: 40px; height: 40px; color: #c084fc; }
.search-button { width: 204px; border: 0; border-radius: 12px; background: linear-gradient(90deg, #a855f7, #9333ea); color: #fff; font: 600 32px "Inter", sans-serif; padding-top: 2px; }

/* Users table */
.table-card { margin-top: 64px; height: 708px; padding: 64px; }
.row { display: grid; grid-template-columns: 530px 188px 316px 388px 208px 209px 329px; height: 154px; align-items: center; border-bottom: 2px solid #0e0914; white-space: nowrap; }
.row > * { padding-left: 32px; }
.head { height: 114px; font-size: 32px; font-weight: 500; color: #d1d5db; border-color: #220f38; padding-top: 2px; letter-spacing: .1px; }
.row-hover { background: #07040c; border-color: #190d27; }
.person { display: flex; flex-direction: column; padding-top: 3px; }
.name { font-size: 32px; line-height: 48px; font-weight: 500; letter-spacing: .55px; word-spacing: -4px; }
.mail { font-size: 28px; line-height: 40px; color: #9ca3af; letter-spacing: .3px; }
.mail-wide { letter-spacing: .45px; }
.badge { display: inline-block; margin: 6px 0 0 1px; height: 46px; line-height: 48px; padding: 0 24px; border-radius: 23px; background: #ca8a04; font-size: 24px; vertical-align: middle; letter-spacing: .2px; }
.badge-user { height: 50px; padding: 0 23px; border: 2px solid #47206b; border-radius: 25px; background: #230e36; color: #c084fc; letter-spacing: 0; }
.select { height: 64px; margin-right: 32px; border: 2px solid #7c3aed; border-radius: 8px; background: #000; display: flex; align-items: center; padding-right: 16px; font-size: 32px; font-weight: 300; color: #9ca3af; letter-spacing: .7px; word-spacing: -4px; }
.select span { margin-left: 20px; padding-top: 5px; }
.select i { width: 2px; height: 32px; background: #ccc; margin-left: auto; margin-right: 16px; }
.select svg { width: 40px; height: 40px; fill: #ccc; }
.status { display: flex; align-items: center; gap: 24px; font-size: 28px; }
.status > span + span, .actions span { padding-top: 1px; }
.check { width: 32px; height: 32px; border-radius: 5px; background: #0075ff; }
.check path { fill: none; stroke: #fff; stroke-width: 4.500; }
.date { padding-top: 1px; font-size: 28px; color: #9ca3af; letter-spacing: .3px; }
.actions { display: flex; gap: 24px; font-size: 28px; }
.actions a { display: flex; align-items: center; gap: 8px; }
.actions svg { width: 32px; height: 32px; }
.view { color: #c084fc; }
.view-hover { color: #d8b4fe; }
.delete { color: #f87171; letter-spacing: .6px; }

.link-status { position: absolute; left: 0; bottom: 0; width: 773px; height: 41px; padding-left: 10px; background: linear-gradient(175deg, #eadcf6, #d3c4dd); border-radius: 0 8px 0 10px; color: #49424f; font-size: 24px; line-height: 41px; white-space: nowrap; }

/* Dock */
.dock-area { position: relative; flex: 1; padding: 4px 64px 0; }
.wallpaper { position: absolute; inset: 0; width: 100%; height: 100%; z-index: -1; }
.dock { height: 100px; border: 2px solid rgba(180, 175, 225, .4); border-radius: 32px; background: linear-gradient(90deg, #585658, #575569 12%, #595669 28%, #6255a8 35%, #685fdd 43%, #695fe6 75%, #665ede 84%, #5a52a4 95%, #5b51ab); display: flex; padding-left: 4px; }
.app { position: relative; width: 82.550px; padding-top: 14px; display: flex; justify-content: center; flex: none; }
.app > svg, .cal { width: 62px; height: 62px; border-radius: 14px; filter: drop-shadow(0 1px 1px rgba(0, 0, 0, .35)); }
.app > .contacts { width: 64px; margin-left: 2px; }
.app.on::after { content: ""; position: absolute; top: 86px; width: 8px; height: 8px; border-radius: 50%; background: #05033a; }
.app > .trash { height: 74px; margin-top: -8px; border-radius: 0; }
.wa { fill: #f7f7f7; }
.ij { font: 700 19px "Liberation Mono", monospace; fill: #fff; }
.word { font: 700 20px "Liberation Sans", sans-serif; fill: #fff; }
.count { position: absolute; top: 7px; left: 50px; width: 30px; height: 30px; border-radius: 15px; background: #f23b32; font-size: 18px; font-weight: 500; line-height: 30px; text-align: center; }
.wide { width: 34px; font-size: 17px; }
.cal { background: #fafafa; overflow: hidden; text-align: center; }
.cal span { display: block; height: 19px; line-height: 20px; background: #f9504a; font-size: 15px; font-weight: 600; }
.cal strong { display: block; font-size: 38px; line-height: 41px; font-weight: 300; color: #222; }
.dock-rule { width: 2px; height: 72px; margin: 12px 17px 0 18px; background: #2c2594; flex: none; }
```
